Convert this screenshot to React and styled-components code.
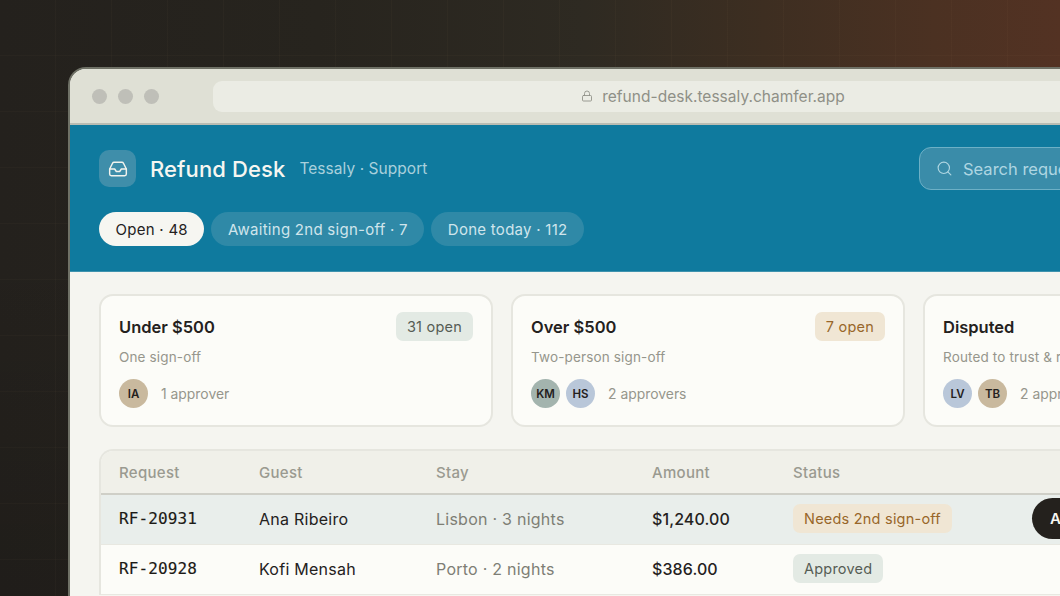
import React from "react";
import styled, { createGlobalStyle } from "styled-components";
import { Inbox, Lock, Search } from "lucide-react";

const GlobalStyle = createGlobalStyle`
  html, body {
    margin: 0;
    padding: 0;
    background: #24211d;
    font-family: Inter, "Liberation Sans", sans-serif;
    overflow: hidden;
  }
  * { box-sizing: border-box; }
`;

const Stage = styled.div`
  width: 1060px;
  height: 596px;
  overflow: hidden;
  padding: 67px 0 0 68px;
  background:
    repeating-linear-gradient(90deg, transparent 0 55px, rgba(255, 200, 140, 0.022) 55px 56px),
    repeating-linear-gradient(180deg, transparent 0 55px, rgba(255, 200, 140, 0.022) 55px 56px),
    linear-gradient(180deg, transparent 40%, rgba(0, 0, 0, 0.12) 100%),
    linear-gradient(90deg, #24211d 0%, #27241e 30%, #2e2a22 55%, #3d2e21 72%, #4b3122 88%, #533223 100%);
`;

const Window = styled.div`
  width: 1280px;
  border: 2px solid #6f7166;
  border-bottom: none;
  border-radius: 18px 18px 0 0;
  overflow: hidden;
  background: #f5f5f0;
`;

const TitleBar = styled.div`
  height: 56px;
  display: flex;
  align-items: center;
  padding: 0 0 0 22px;
  background: #dfe0d5;
  border-bottom: 2px solid #b9bcb3;
`;

const Dots = styled.div`
  display: flex;
  gap: 11px;
  margin-right: 54px;
`;

const Dot = styled.span`
  width: 15px;
  height: 15px;
  border-radius: 50%;
  background: #bfbfb8;
`;

const UrlBar = styled.div`
  width: 1000px;
  height: 31px;
  border-radius: 9px;
  background: #ebece4;
  color: #8f9087;
  font-size: 15.5px;
  letter-spacing: 0.02px;
  display: flex;
  align-items: center;
  justify-content: center;
  gap: 9px;
`;

const Header = styled.header`
  background: #0f7a9e;
  padding: 22px 29px 25px;
  border-bottom: 1px solid #3f93ae;
`;

const HeaderRow = styled.div`
  display: flex;
  align-items: center;
  justify-content: space-between;
`;

const Brand = styled.div`
  display: flex;
  align-items: center;
`;

const BrandIcon = styled.div`
  width: 37px;
  height: 37px;
  border-radius: 10px;
  background: #3f8eaa;
  color: #f3f4ee;
  display: flex;
  align-items: center;
  justify-content: center;
  margin-right: 14px;
`;

const BrandTitle = styled.h1`
  margin: 0 14px 0 0;
  font-size: 22px;
  font-weight: 500;
  letter-spacing: 0.12px;
  color: #f6f6f1;
`;

const BrandSub = styled.span`
  font-size: 15.5px;
  letter-spacing: 0.05px;
  color: #a9d0dc;
`;

const SearchBox = styled.div`
  width: 398px;
  height: 43px;
  border: 1.5px solid #6db0c6;
  border-radius: 12px;
  background: #3a8ca9;
  color: #afd6e2;
  font-size: 16.5px;
  display: flex;
  align-items: center;
  gap: 10px;
  padding: 0 16px;
`;

const Tabs = styled.nav`
  display: flex;
  gap: 7px;
  margin-top: 22px;
`;

const Tab = styled.button`
  height: 34px;
  padding: 0 16.5px;
  border: none;
  border-radius: 17px;
  font: inherit;
  font-size: 15px;
  letter-spacing: 0.27px;
  background: ${(p) => (p.$active ? "#f6f6f1" : "#2f89a7")};
  color: ${(p) => (p.$active ? "#24211d" : "#d0e5ec")};
`;

const Content = styled.main`
  padding: 22px 29px 40px;
`;

const Cards = styled.section`
  display: grid;
  grid-template-columns: repeat(3, 394px);
  gap: 18px;
`;

const Card = styled.article`
  height: 133px;
  border: 2px solid #e6e6df;
  border-radius: 14px;
  background: #fcfcf8;
  padding: 16px 18px 0;
`;

const CardTop = styled.div`
  display: flex;
  align-items: center;
  justify-content: space-between;
`;

const CardTitle = styled.h2`
  margin: 0;
  font-size: 16.5px;
  font-weight: 600;
  color: #24211d;
`;

const Badge = styled.span`
  display: inline-flex;
  align-items: center;
  height: 29px;
  padding: 0 11px;
  border-radius: 7px;
  font-size: 14.5px;
  letter-spacing: 0.22px;
  background: ${(p) => (p.$tone === "warn" ? "#f0e6d4" : "#e3eae4")};
  color: ${(p) => (p.$tone === "warn" ? "#98662a" : "#565d55")};
`;

const CardSub = styled.p`
  margin: 8px 0 0;
  font-size: 13.5px;
  letter-spacing: 0.15px;
  color: #96968c;
`;

const Approvers = styled.div`
  display: flex;
  align-items: center;
  gap: 6px;
  margin-top: 14px;
`;

const Avatar = styled.span`
  width: 29px;
  height: 29px;
  border-radius: 50%;
  background: ${(p) => p.$bg};
  color: #24211d;
  font-size: 11.5px;
  font-weight: 600;
  display: flex;
  align-items: center;
  justify-content: center;
`;

const ApproverText = styled.span`
  margin-left: 7px;
  font-size: 13.9px;
  color: #96968c;
`;

const Table = styled.section`
  margin-top: 22px;
  border: 2px solid #e6e6df;
  border-bottom: none;
  border-radius: 14px 14px 0 0;
  overflow: hidden;
  background: #fcfcf8;
`;

const columns = "140px 177px 216px 141px 239px 1fr";

const HeadRow = styled.div`
  display: grid;
  grid-template-columns: ${columns};
  align-items: center;
  height: 44px;
  padding-left: 18px;
  background: #f0f0e9;
  border-bottom: 2px solid #cfcfc7;
  color: #9a9a90;
  font-size: 15px;
  font-weight: 500;
  letter-spacing: 0.3px;
`;

const Row = styled.div`
  display: grid;
  grid-template-columns: ${columns};
  align-items: center;
  height: 50px;
  padding: 0 0 2px 18px;
  font-size: 16px;
  letter-spacing: 0.25px;
  color: #24211d;
  background: ${(p) => (p.$selected ? "#e9eeeb" : "#fcfcf8")};
  border-bottom: 1px solid #e8e8e1;
`;

const Code = styled.span`
  font-family: "DejaVu Sans Mono", monospace;
  font-size: 16px;
  letter-spacing: 0.1px;
  font-weight: 400;
  color: #1c1a16;
  -webkit-text-stroke: 0.15px #1c1a16;
`;

const Stay = styled.span`
  color: #7e7e75;
`;

const Amount = styled.span`
  font-weight: 500;
  letter-spacing: 0.1px;
`;

const StatusCell = styled.div`
  display: flex;
`;

const ActionButton = styled.button`
  width: 110px;
  height: 41px;
  border: none;
  border-radius: 21px;
  background: #24211d;
  color: #f6f6f1;
  font: inherit;
  font-size: 15px;
  font-weight: 600;
  text-align: left;
  padding-left: 18px;
`;

const cards = [
  { title: "Under $500", badge: "31 open", sub: "One sign-off", people: [["IA", "#c9b99e"]], note: "1 approver" },
  { title: "Over $500", badge: "7 open", tone: "warn", sub: "Two-person sign-off", people: [["KM", "#a3b4ae"], ["HS", "#b9c7d9"]], note: "2 approvers" },
  { title: "Disputed", badge: "9 open", sub: "Routed to trust & risk", people: [["LV", "#b9c7d9"], ["TB", "#c9b99e"]], note: "2 approvers" },
];

const rows = [
  { id: "RF-20931", guest: "Ana Ribeiro", stay: "Lisbon · 3 nights", amount: "$1,240.00", status: "Needs 2nd sign-off", tone: "warn", selected: true },
  { id: "RF-20928", guest: "Kofi Mensah", stay: "Porto · 2 nights", amount: "$386.00", status: "Approved" },
];

export default function App() {
  return (
    <Stage>
      <GlobalStyle />
      <Window>
        <TitleBar>
          <Dots>
            <Dot />
            <Dot />
            <Dot />
          </Dots>
          <UrlBar>
            <Lock size={12} strokeWidth={1.75} />
            refund-desk.tessaly.chamfer.app
          </UrlBar>
        </TitleBar>
        <Header>
          <HeaderRow>
            <Brand>
              <BrandIcon>
                <Inbox size={20} strokeWidth={1.75} />
              </BrandIcon>
              <BrandTitle>Refund Desk</BrandTitle>
              <BrandSub>Tessaly · Support</BrandSub>
            </Brand>
            <SearchBox>
              <Search size={17} strokeWidth={1.6} />
              Search requests
            </SearchBox>
          </HeaderRow>
          <Tabs>
            <Tab $active>Open · 48</Tab>
            <Tab>Awaiting 2nd sign-off · 7</Tab>
            <Tab>Done today · 112</Tab>
          </Tabs>
        </Header>
        <Content>
          <Cards>
            {cards.map((c) => (
              <Card key={c.title}>
                <CardTop>
                  <CardTitle>{c.title}</CardTitle>
                  <Badge $tone={c.tone}>{c.badge}</Badge>
                </CardTop>
                <CardSub>{c.sub}</CardSub>
                <Approvers>
                  {c.people.map(([initials, bg]) => (
                    <Avatar key={initials} $bg={bg}>{initials}</Avatar>
                  ))}
                  <ApproverText>{c.note}</ApproverText>
                </Approvers>
              </Card>
            ))}
          </Cards>
          <Table>
            <HeadRow>
              <span>Request</span>
              <span>Guest</span>
              <span>Stay</span>
              <span>Amount</span>
              <span>Status</span>
            </HeadRow>
            {rows.map((r) => (
              <Row key={r.id} $selected={r.selected}>
                <Code>{r.id}</Code>
                <span>{r.guest}</span>
                <Stay>{r.stay}</Stay>
                <Amount>{r.amount}</Amount>
                <StatusCell>
                  <Badge $tone={r.tone}>{r.status}</Badge>
                </StatusCell>
                {r.selected && <div><ActionButton>Approve</ActionButton></div>}
              </Row>
            ))}
          </Table>
        </Content>
      </Window>
    </Stage>
  );
}
